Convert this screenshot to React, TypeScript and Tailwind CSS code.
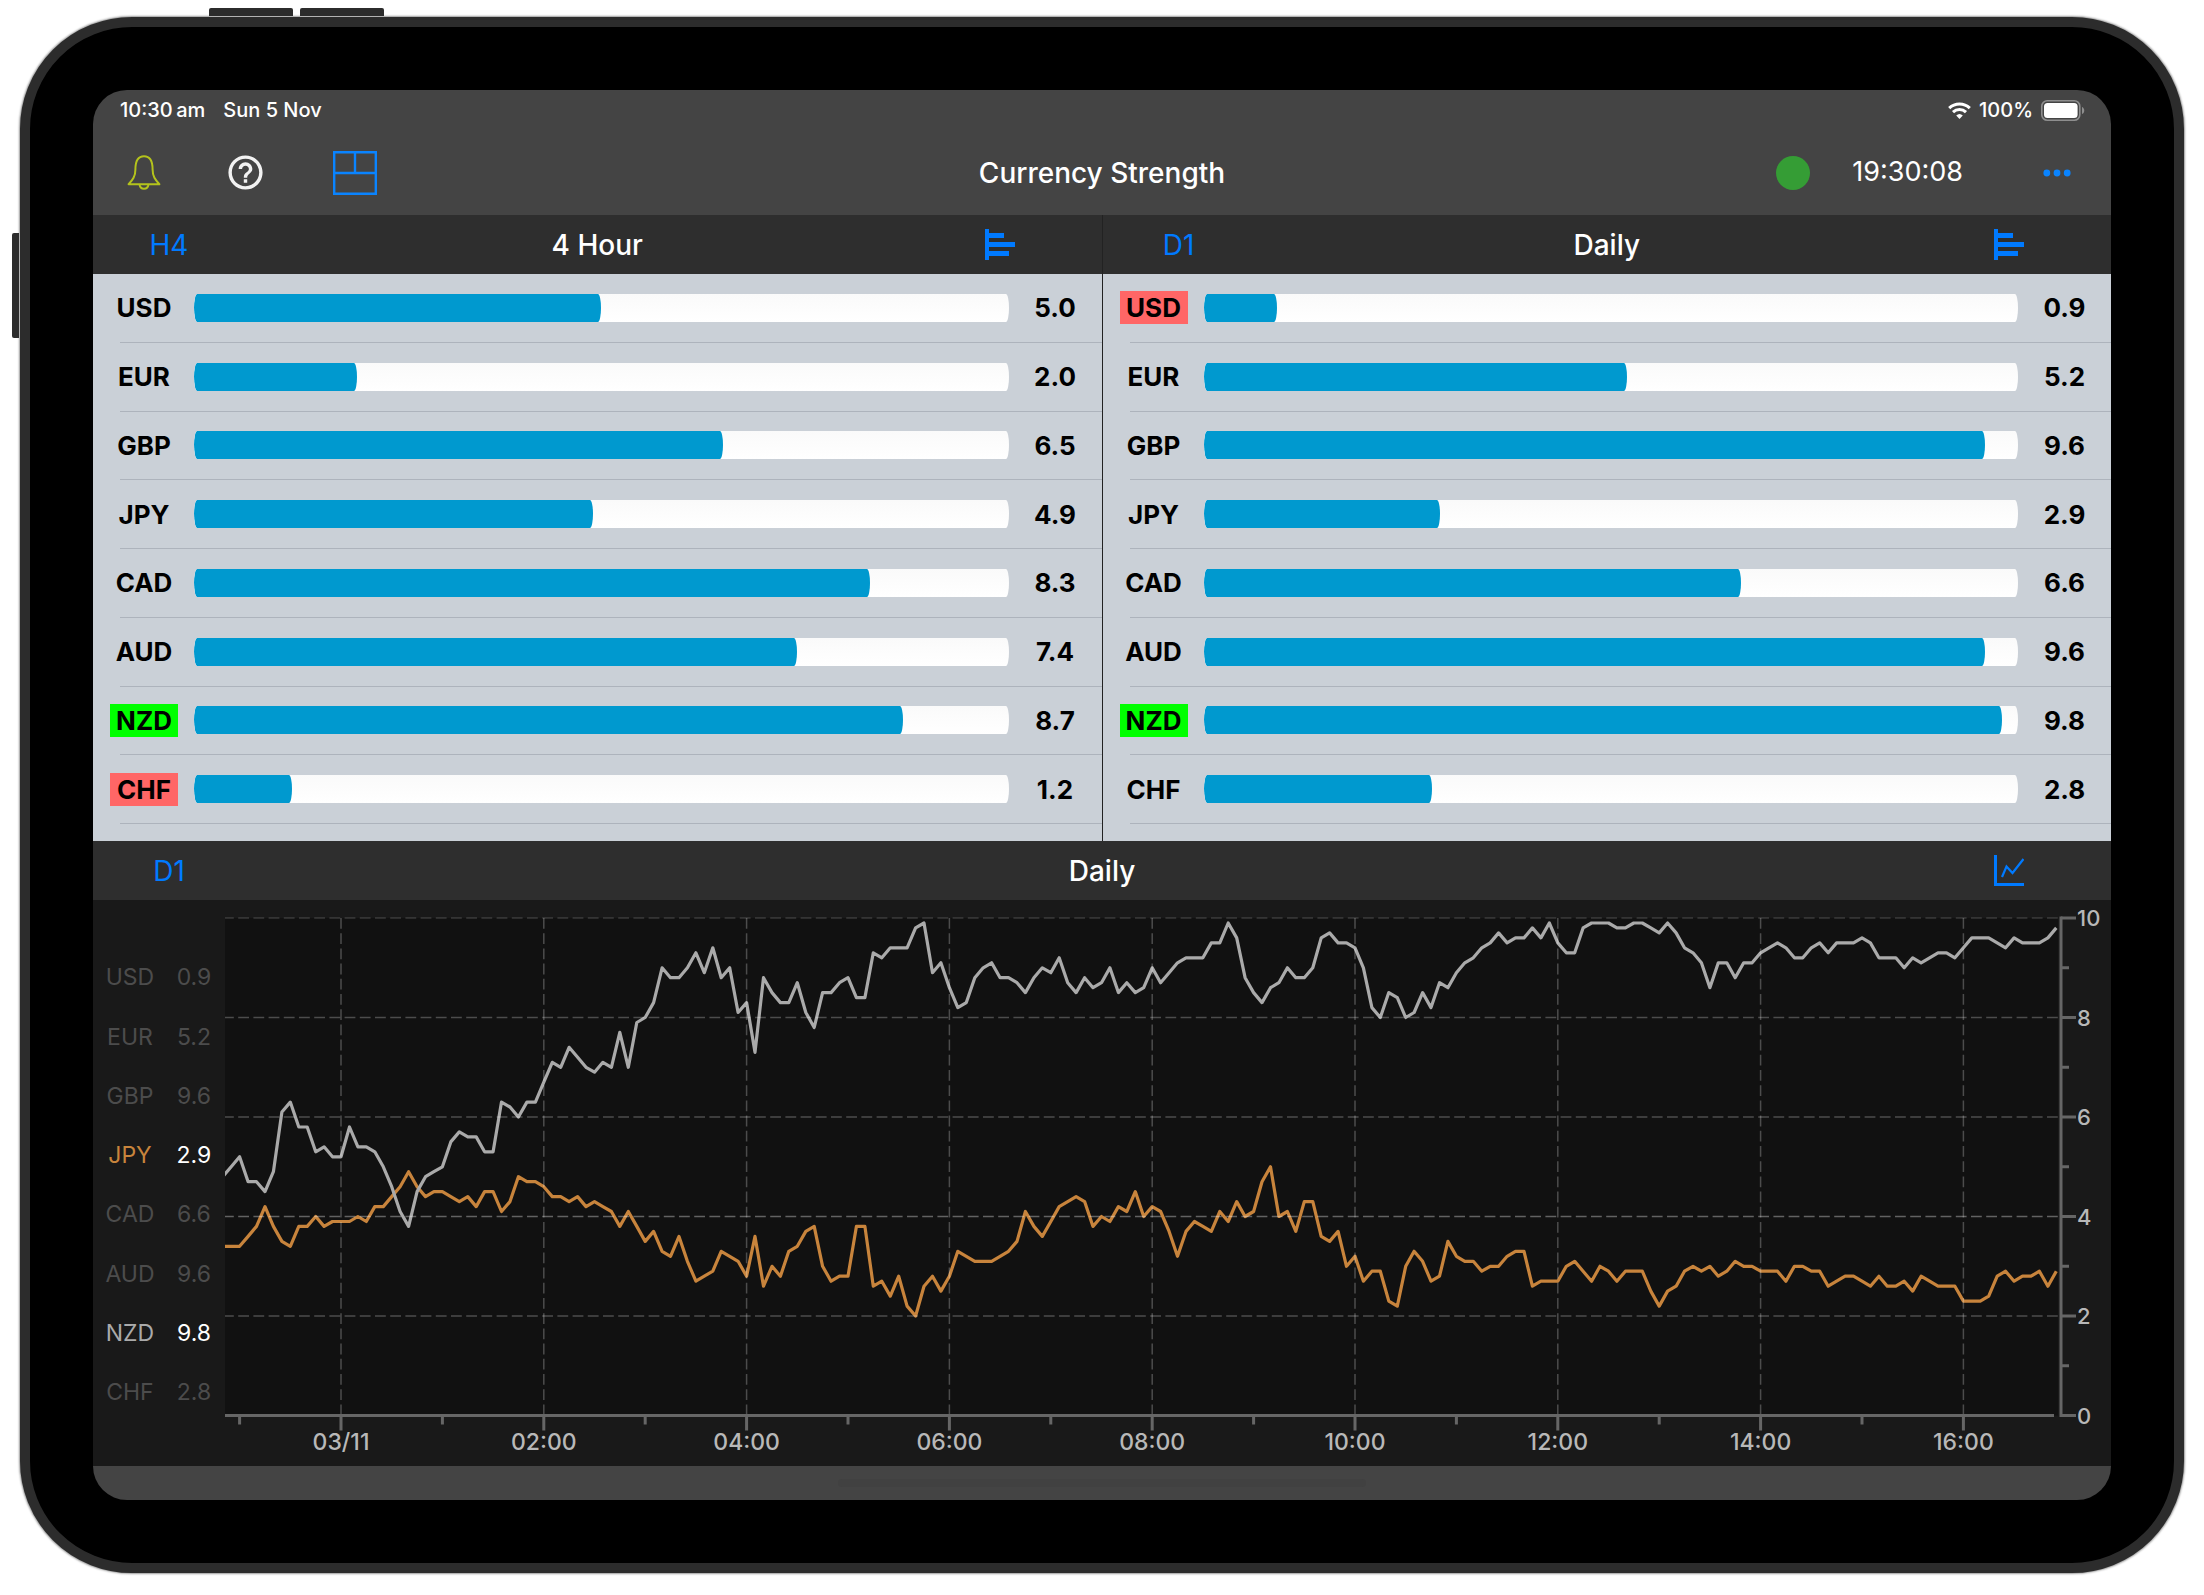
import { MdHelpOutline } from "react-icons/md";

type Strength = { code: string; value: number };

const H4: Strength[] = [
    { code: "USD", value: 5.0 },
    { code: "EUR", value: 2.0 },
    { code: "GBP", value: 6.5 },
    { code: "JPY", value: 4.9 },
    { code: "CAD", value: 8.3 },
    { code: "AUD", value: 7.4 },
    { code: "NZD", value: 8.7 },
    { code: "CHF", value: 1.2 },
];

const D1: Strength[] = [
    { code: "USD", value: 0.9 },
    { code: "EUR", value: 5.2 },
    { code: "GBP", value: 9.6 },
    { code: "JPY", value: 2.9 },
    { code: "CAD", value: 6.6 },
    { code: "AUD", value: 9.6 },
    { code: "NZD", value: 9.8 },
    { code: "CHF", value: 2.8 },
];

// One reading every 5 minutes, the first one 14 readings before midnight
const NZD = [
    4.8, 5.0, 5.2, 4.7, 4.7, 4.5, 4.9, 6.1, 6.3, 5.8, 5.8, 5.3, 5.4, 5.2,
    5.2, 5.8, 5.4, 5.4, 5.3, 5.0, 4.6, 4.1, 3.8, 4.5, 4.8, 4.9, 5.0, 5.5, 5.7, 5.6, 5.6, 5.3, 5.3, 6.3, 6.2, 6.0, 6.3, 6.3,
    6.7, 7.1, 7.0, 7.4, 7.2, 7.0, 6.9, 7.1, 7.0, 7.7, 7.0, 7.9, 8.0, 8.3, 9.0, 8.8, 8.8, 9.0, 9.3, 8.9, 9.4, 8.8, 9.0, 8.1,
    8.3, 7.3, 8.8, 8.5, 8.3, 8.3, 8.7, 8.1, 7.8, 8.5, 8.5, 8.7, 8.8, 8.4, 8.4, 9.3, 9.2, 9.4, 9.4, 9.4, 9.8, 9.9, 8.9, 9.1,
    8.6, 8.2, 8.3, 8.8, 9.0, 9.1, 8.8, 8.8, 8.7, 8.5, 8.8, 9.0, 8.9, 9.2, 8.7, 8.5, 8.8, 8.6, 8.7, 9.0, 8.5, 8.7, 8.5, 8.6,
    9.0, 8.7, 8.9, 9.1, 9.2, 9.2, 9.2, 9.5, 9.5, 9.9, 9.6, 8.8, 8.5, 8.3, 8.6, 8.7, 9.0, 8.8, 8.8, 9.0, 9.6, 9.7, 9.5, 9.5,
    9.4, 9.0, 8.2, 8.0, 8.5, 8.4, 8.0, 8.1, 8.5, 8.2, 8.7, 8.6, 8.9, 9.1, 9.2, 9.4, 9.5, 9.7, 9.5, 9.6, 9.6, 9.8, 9.6, 9.9,
    9.5, 9.3, 9.3, 9.8, 9.9, 9.9, 9.9, 9.8, 9.8, 9.9, 9.9, 9.8, 9.7, 9.9, 9.7, 9.4, 9.3, 9.1, 8.6, 9.1, 9.1, 8.8, 9.1, 9.1,
    9.3, 9.4, 9.5, 9.4, 9.2, 9.2, 9.4, 9.5, 9.3, 9.5, 9.5, 9.5, 9.6, 9.5, 9.2, 9.2, 9.2, 9.0, 9.2, 9.1, 9.2, 9.3, 9.3, 9.2,
    9.4, 9.6, 9.6, 9.6, 9.5, 9.4, 9.6, 9.5, 9.5, 9.5, 9.6, 9.8,
];

const JPY = [
    3.4, 3.4, 3.4, 3.6, 3.8, 4.2, 3.8, 3.5, 3.4, 3.8, 3.8, 4.0, 3.8, 3.9,
    3.9, 3.9, 4.0, 3.9, 4.2, 4.2, 4.4, 4.6, 4.9, 4.6, 4.4, 4.5, 4.5, 4.4, 4.3, 4.4, 4.2, 4.5, 4.5, 4.1, 4.3, 4.8, 4.7, 4.7,
    4.6, 4.4, 4.4, 4.3, 4.4, 4.2, 4.3, 4.2, 4.1, 3.8, 4.1, 3.8, 3.5, 3.7, 3.3, 3.2, 3.6, 3.1, 2.7, 2.8, 2.9, 3.3, 3.2, 3.1,
    2.8, 3.6, 2.6, 3.0, 2.8, 3.3, 3.4, 3.7, 3.8, 3.0, 2.7, 2.8, 2.8, 3.8, 3.8, 2.6, 2.7, 2.4, 2.8, 2.2, 2.0, 2.6, 2.8, 2.5,
    2.8, 3.3, 3.2, 3.1, 3.1, 3.1, 3.2, 3.3, 3.5, 4.1, 3.8, 3.6, 3.9, 4.2, 4.3, 4.4, 4.3, 3.8, 4.0, 3.9, 4.2, 4.1, 4.5, 4.0,
    4.2, 4.1, 3.7, 3.2, 3.7, 3.9, 3.8, 3.7, 4.1, 3.9, 4.3, 4.0, 4.1, 4.7, 5.0, 4.0, 4.1, 3.7, 4.3, 4.3, 3.6, 3.5, 3.7, 3.0,
    3.2, 2.7, 2.9, 2.9, 2.3, 2.2, 3.0, 3.3, 3.1, 2.7, 2.8, 3.5, 3.2, 3.1, 3.1, 2.9, 3.0, 3.0, 3.2, 3.3, 3.3, 2.6, 2.7, 2.7,
    2.7, 3.0, 3.1, 2.9, 2.7, 3.0, 2.9, 2.7, 2.9, 2.9, 2.9, 2.5, 2.2, 2.5, 2.6, 2.9, 3.0, 2.9, 3.0, 2.8, 2.9, 3.1, 3.0, 3.0,
    2.9, 2.9, 2.9, 2.7, 3.0, 3.0, 2.9, 2.9, 2.6, 2.7, 2.8, 2.8, 2.7, 2.6, 2.8, 2.6, 2.6, 2.7, 2.5, 2.8, 2.7, 2.6, 2.6, 2.6,
    2.3, 2.3, 2.3, 2.4, 2.8, 2.9, 2.7, 2.8, 2.8, 2.9, 2.6, 2.9,
];

const TIMES = ["03/11", "02:00", "04:00", "06:00", "08:00", "10:00", "12:00", "14:00", "16:00"];

const LABEL_STYLES: Record<string, string> = {
    high: "bg-[#00ff00]",
    low: "bg-[#ff6666]",
    none: "",
};

const LEGEND_STYLES: Record<string, string> = {
    JPY: "text-[#c8843c]",
    NZD: "text-[#aaaaaa]",
};

function BarsIcon() {
    return (
        <svg width="30" height="31" viewBox="0 0 30 31" fill="#007aff">
            <path d="M0 0h4v31h-4zM4 4h15v5h-15zM4 13h26v5h-26zM4 22h20v5h-20z" />
        </svg>
    );
}

function LineIcon() {
    return (
        <svg width="30" height="31" viewBox="0 0 30 31" fill="none" stroke="#007aff">
            <path d="M1.5 0v29.5H30" strokeWidth="3" />
            <path d="M8 22l4.5-10.5 6 6.5L29.5 4" strokeWidth="2.2" />
        </svg>
    );
}

function StatusBar() {
    return (
        <div className="flex h-10 items-center justify-between pl-[27px] pr-[26px] text-[20px] font-medium">
            <div className="flex gap-[18px]">
                <span>10:30{"\u2009"}am</span>
                <span>Sun 5 Nov</span>
            </div>
            <div className="flex items-center gap-2">
                <svg width="23" height="17" viewBox="0 0 23 17" fill="none" stroke="white" strokeWidth="3">
                    <path d="M1.2 6.2a14.8 14.8 0 0 1 20.6 0" />
                    <path d="M5 10.2a9.4 9.4 0 0 1 13 0" />
                    <path d="M11.5 17l-3.3-3.4a4.8 4.8 0 0 1 6.6 0z" fill="white" stroke="none" />
                </svg>
                <span>100%</span>
                <svg width="44" height="21" viewBox="0 0 44 21">
                    <rect x="0.8" y="0.8" width="38" height="19.4" rx="5.5" fill="none" stroke="#8e8e8e" strokeWidth="1.6" />
                    <rect x="3" y="3" width="33.6" height="15" rx="3.5" fill="white" />
                    <path d="M41 7c3 1 3 6 0 7z" fill="#8e8e8e" />
                </svg>
            </div>
        </div>
    );
}

function Toolbar() {
    return (
        <div className="grid h-[85px] grid-cols-[1fr_auto_1fr] items-center px-[34px]">
            <div className="flex items-center gap-16">
                <button type="button" aria-label="Alerts">
                    <svg width="34" height="35" viewBox="0 0 34 35" fill="none" stroke="#b4c31c" strokeWidth="2">
                        <path d="M1.6 29.2C5.8 24.8 8.4 21.5 8.4 14.4C8.4 6 11 1.2 17 1.2S25.6 6 25.6 14.4C25.6 21.5 28.2 24.8 32.4 29.2Z" strokeLinejoin="round" />
                        <path d="M12.6 29.6c.6 5.4 8.2 5.4 8.8 0" />
                    </svg>
                </button>
                <button type="button" aria-label="Help">
                    <MdHelpOutline className="size-[41px] text-[#f2f2f2]" />
                </button>
                <button type="button" aria-label="Layout">
                    <svg width="50" height="50" viewBox="0 0 50 50" fill="none" stroke="#0a84ff" strokeWidth="2.4">
                        <path d="M4.2 4.2h41.6v41.6H4.2zM4.2 25h41.6M25 4.2V25" />
                    </svg>
                </button>
            </div>
            <h1 className="text-[28px] font-medium">Currency Strength</h1>
            <div className="flex items-center justify-end">
                <span className="size-[34px] rounded-full bg-[#359d35]" />
                <time className="ml-[42px] text-[27px]">19:30:08</time>
                <button type="button" aria-label="More" className="mr-1.5 ml-20">
                    <svg width="28" height="8" viewBox="0 0 28 8" fill="#0a84ff">
                        <circle cx="3.8" cy="4" r="3.4" />
                        <circle cx="14" cy="4" r="3.4" />
                        <circle cx="24.2" cy="4" r="3.4" />
                    </svg>
                </button>
            </div>
        </div>
    );
}

function PanelHeader({ frame, title, chart }: { frame: string; title: string; chart?: boolean }) {
    return (
        <div className="grid h-[59px] grid-cols-[1fr_auto_1fr] items-center bg-[#2e2e2e] px-11">
            <button type="button" className="w-16 text-[28px] text-[#007aff]">{frame}</button>
            <h2 className="text-[28px] font-medium">{title}</h2>
            <button type="button" aria-label="Change view" className="mr-[43px] justify-self-end">
                {chart ? <LineIcon /> : <BarsIcon />}
            </button>
        </div>
    );
}

function StrengthPanel({ frame, title, rows }: { frame: string; title: string; rows: Strength[] }) {
    const values = rows.map((r) => r.value);
    const max = Math.max(...values);
    const min = Math.min(...values);

    return (
        <section className="flex-1">
            <PanelHeader frame={frame} title={title} />
            <div className="bg-[#cad0d7] pb-[17px] text-black">
                <ul className="grid h-[550px] grid-rows-8">
                    {rows.map((row) => {
                        const mark = row.value === max ? "high" : row.value === min ? "low" : "none";
                        return (
                            <li key={row.code} className="flex flex-col">
                                <div className="flex flex-1 items-center pl-[17px] text-[26px] font-bold">
                                    <span className={`w-[68px] text-center leading-[33px] ${LABEL_STYLES[mark]}`}>{row.code}</span>
                                    <div className="ml-4 h-7 flex-1 overflow-hidden bg-gradient-to-b from-[#fafafa] to-white [border-radius:4px/18px]">
                                        <div className="h-full bg-[#0099cf] [border-radius:4px/18px]" style={{ width: `${row.value * 10}%` }} />
                                    </div>
                                    <span className="w-[93px] text-center">{row.value.toFixed(1)}</span>
                                </div>
                                <div className="ml-[27px] h-px bg-[#adb3bc]" />
                            </li>
                        );
                    })}
                </ul>
            </div>
        </section>
    );
}

// Chart geometry, in viewBox units
const MIDNIGHT = 116;
const STEP = 8.45;
const TOP = 18;
const UNIT = 49.75;
const BOTTOM = TOP + UNIT * 10;

const toPoints = (data: number[]) =>
    data.map((v, i) => `${(MIDNIGHT + (i - 14) * STEP).toFixed(1)},${(TOP + (10 - v) * UNIT).toFixed(1)}`).join(" ");

function StrengthChart() {
    return (
        <svg viewBox="0 0 1886 566" className="block h-auto min-w-0 flex-1">
            <defs>
                <clipPath id="plot">
                    <rect x="0" y={TOP} width="1833" height={UNIT * 10} />
                </clipPath>
            </defs>
            <rect x="0" y={TOP} width="1833" height={UNIT * 10} fill="#111111" />
            <g clipPath="url(#plot)" fill="none" strokeWidth="3.2" strokeLinejoin="round">
                <polyline points={toPoints(JPY)} stroke="#c8843c" />
                <polyline points={toPoints(NZD)} stroke="#aaaaaa" />
            </g>
            <g stroke="white" strokeOpacity="0.25" strokeWidth="1.5" strokeDasharray="10.8 4.4">
                {[10, 8, 6, 4, 2].map((v) => (
                    <path key={v} d={`M-2 ${TOP + (10 - v) * UNIT}H1833`} strokeOpacity={v === 10 ? 0.16 : v === 4 ? 0.34 : 0.25} />
                ))}
                {TIMES.map((t, i) => (
                    <path key={t} d={`M${MIDNIGHT + i * 24 * STEP} ${TOP}V${BOTTOM}`} />
                ))}
            </g>
            <g stroke="#666666" strokeWidth="3">
                <path d={`M0 ${BOTTOM}H1829`} />
                <path d={`M1836 ${TOP - 1.5}V${BOTTOM + 1.5}`} />
                {TIMES.map((t, i) => (
                    <path
                        key={t}
                        d={`M${MIDNIGHT + (i * 24 - 12) * STEP} ${BOTTOM}v9M${MIDNIGHT + i * 24 * STEP} ${BOTTOM}v15`}
                    />
                ))}
                {[0, 2, 4, 6, 8, 10].map((v) => (
                    <path key={v} d={`M1836 ${TOP + v * UNIT}h15`} />
                ))}
                {[1, 3, 5, 7, 9].map((v) => (
                    <path key={v} d={`M1836 ${TOP + v * UNIT}h8`} />
                ))}
            </g>
            <g fill="#b8b8b8" fontSize="22" fontWeight="500">
                {TIMES.map((t, i) => (
                    <text key={t} x={MIDNIGHT + i * 24 * STEP} y="550" fontSize="23" textAnchor="middle">{t}</text>
                ))}
                {[0, 2, 4, 6, 8, 10].map((v) => (
                    <text key={v} x="1852" y={TOP + (10 - v) * UNIT + 8}>{v}</text>
                ))}
            </g>
        </svg>
    );
}

export default function App() {
    return (
        <div className="bg-white px-5 pt-[17px] pb-[22px] font-['Inter','Liberation_Sans',sans-serif]">
            <div className="relative rounded-[112px] border-10 border-[#2c2c2c] bg-black p-[63px] shadow-[0_0_2px_1px_#999999]">
                {/* Hardware buttons on the case */}
                <div className="absolute -top-[19px] left-[179px] flex gap-[7px]">
                    <span className="h-2 w-[84px] rounded-t-[2px] bg-[#2c2c2c]" />
                    <span className="h-2 w-[84px] rounded-t-[2px] bg-[#2c2c2c]" />
                </div>
                <span className="absolute top-[206px] -left-[18px] h-[105px] w-[7px] rounded-l-[2px] bg-[#2c2c2c]" />

                <main className="overflow-hidden rounded-[34px] bg-[#444444] text-white">
                    <header>
                        <StatusBar />
                        <Toolbar />
                    </header>

                    <div className="flex">
                        <StrengthPanel frame="H4" title="4 Hour" rows={H4} />
                        <div className="w-px bg-[#222222]" />
                        <StrengthPanel frame="D1" title="Daily" rows={D1} />
                    </div>

                    <section>
                        <PanelHeader frame="D1" title="Daily" chart />
                        <div className="flex bg-[#191919]">
                            <ul className="flex w-[132px] flex-col pt-12 pb-11 pl-1 text-[23px]">
                                {D1.map(({ code, value }) => (
                                    <li key={code} className="flex flex-1 items-center text-center">
                                        <span className={`w-[68px] ${LEGEND_STYLES[code] ?? "text-[#4c4c4c]"}`}>{code}</span>
                                        <span className={`w-16 ${LEGEND_STYLES[code] ? "text-white" : "text-[#4c4c4c]"}`}>
                                            {value.toFixed(1)}
                                        </span>
                                    </li>
                                ))}
                            </ul>
                            <StrengthChart />
                        </div>
                    </section>

                    <footer className="flex h-[34px] items-center justify-center">
                        <span className="h-2 w-[528px] rounded-full bg-[#414141]" />
                    </footer>
                </main>
            </div>
        </div>
    );
}
